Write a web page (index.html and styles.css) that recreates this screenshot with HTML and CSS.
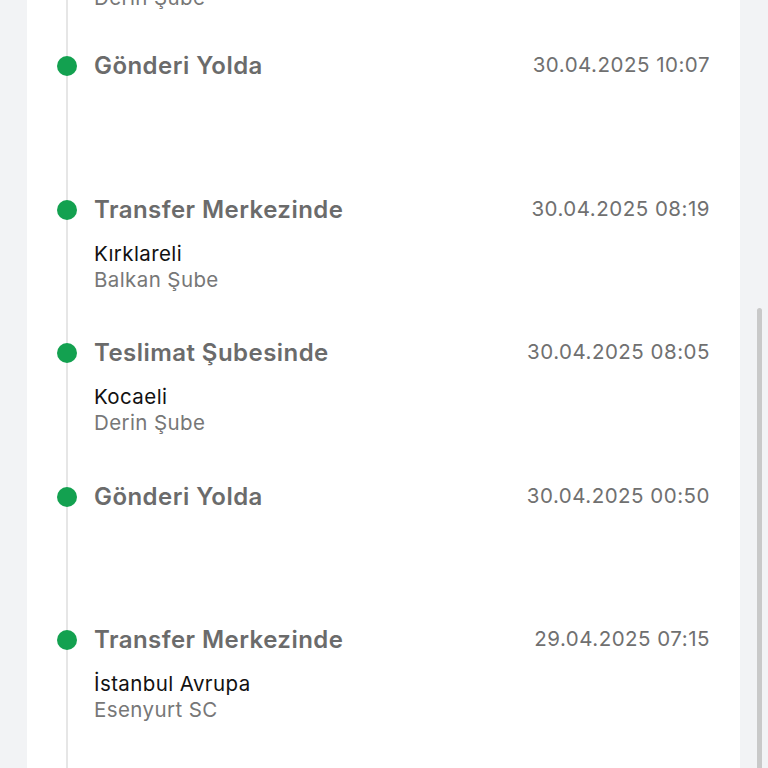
FILE: index.html
```html
<!DOCTYPE html>
<html lang="tr">
<head>
    <meta charset="UTF-8">
    <meta name="viewport" content="width=device-width, initial-scale=1.0">
    <title>Gönderi Hareketleri</title>
    <link rel="stylesheet" href="styles.css">
</head>
<body>
    <div class="card">
        <div class="timeline">
            <div class="event">
                <span class="dot"></span>
                <div class="event-body">
                    <div class="event-title">Teslimat Şubesinde</div>
                    <div class="event-city">Kocaeli</div>
                    <div class="event-branch">Derin Şube</div>
                </div>
                <div class="event-date">30.04.2025 11:42</div>
            </div>
            <div class="event">
                <span class="dot"></span>
                <div class="event-body">
                    <div class="event-title">Gönderi Yolda</div>
                </div>
                <div class="event-date">30.04.2025 10:07</div>
            </div>
            <div class="event">
                <span class="dot"></span>
                <div class="event-body">
                    <div class="event-title">Transfer Merkezinde</div>
                    <div class="event-city">Kırklareli</div>
                    <div class="event-branch">Balkan Şube</div>
                </div>
                <div class="event-date">30.04.2025 08:19</div>
            </div>
            <div class="event">
                <span class="dot"></span>
                <div class="event-body">
                    <div class="event-title">Teslimat Şubesinde</div>
                    <div class="event-city">Kocaeli</div>
                    <div class="event-branch">Derin Şube</div>
                </div>
                <div class="event-date">30.04.2025 08:05</div>
            </div>
            <div class="event">
                <span class="dot"></span>
                <div class="event-body">
                    <div class="event-title">Gönderi Yolda</div>
                </div>
                <div class="event-date">30.04.2025 00:50</div>
            </div>
            <div class="event">
                <span class="dot"></span>
                <div class="event-body">
                    <div class="event-title">Transfer Merkezinde</div>
                    <div class="event-city">İstanbul Avrupa</div>
                    <div class="event-branch">Esenyurt SC</div>
                </div>
                <div class="event-date">29.04.2025 07:15</div>
            </div>
        </div>
    </div>
    <div class="scroll-thumb"></div>
</body>
</html>
```

FILE: styles.css
```css
html, body {
    margin: 0;
    height: 100%;
    overflow: hidden;
}
body {
    font-family: Inter, "Noto Sans", sans-serif;
    background-color: #f2f3f5;
}
.card {
    margin-left: 27px;
    width: 713px;
    min-height: 100%;
    background-color: #ffffff;
    padding: 0 30px;
    box-sizing: border-box;
}
.timeline {
    position: relative;
    margin-top: -86px;
}
.timeline::before {
    content: "";
    position: absolute;
    left: 9px;
    top: 0;
    bottom: -200px;
    width: 2px;
    background-color: #e6e6e6;
}
.event {
    display: flex;
    align-items: flex-start;
    height: 143.5px;
    position: relative;
}
.event:first-child {
    height: 138px;
}
.dot {
    flex: none;
    width: 20px;
    height: 20px;
    margin-top: 4px;
    border-radius: 50%;
    background-color: #13a150;
}
.event-body {
    flex: 1;
    margin-left: 17px;
}
.event-title {
    font-size: 24px;
    line-height: 28px;
    font-weight: 600;
    letter-spacing: 0.45px;
    color: #6b6b6b;
    margin-bottom: 17px;
}
.event-city {
    font-size: 20.5px;
    line-height: 26px;
    letter-spacing: 0.4px;
    color: #111111;
}
.event-branch {
    font-size: 20.5px;
    line-height: 26px;
    letter-spacing: 0.4px;
    color: #777777;
}
.event-date {
    font-size: 20.5px;
    line-height: 26px;
    letter-spacing: 0.5px;
    color: #707070;
    white-space: nowrap;
}
.scroll-thumb {
    position: absolute;
    left: 757px;
    top: 308px;
    width: 5px;
    height: 470px;
    border-radius: 3px;
    background-color: #c9c9c9;
}
```
